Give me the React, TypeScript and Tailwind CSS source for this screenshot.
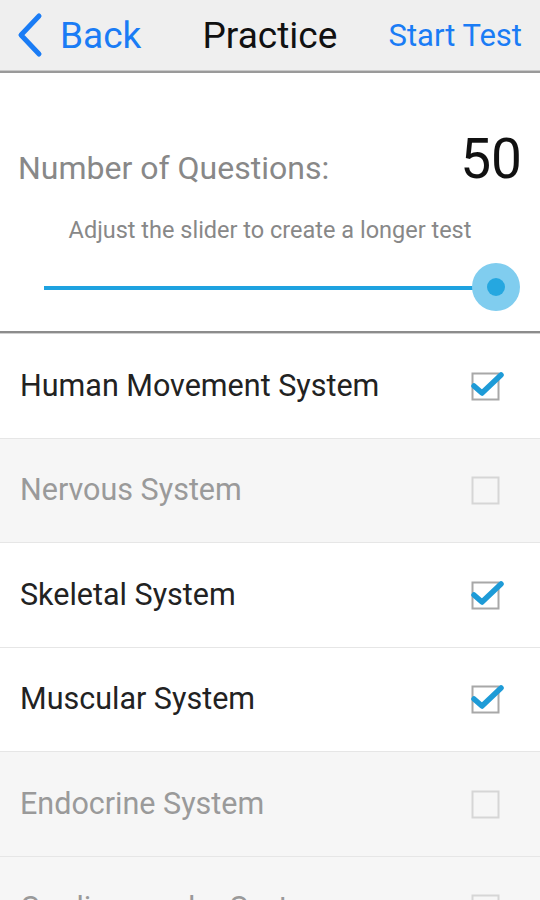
import { useState } from "react"

const topics = [
  { name: "Human Movement System", checked: true },
  { name: "Nervous System", checked: false },
  { name: "Skeletal System", checked: true },
  { name: "Muscular System", checked: true },
  { name: "Endocrine System", checked: false },
  { name: "Cardiovascular System", checked: false },
]

function CheckBox({ checked }: { checked: boolean }) {
  return (
    <svg width="34" height="34" viewBox="0 0 34 34">
      <rect x="2.5" y="4.5" width="26" height="26" fill="none" stroke={checked ? "#a8a8a8" : "#d6d6d6"} strokeWidth="2" />
      {checked && (
        <path d="M4 17 L12 24 L31 6" fill="none" stroke="#1e9bd7" strokeWidth="5.5" strokeLinecap="round" strokeLinejoin="round" />
      )}
    </svg>
  )
}

export default function App() {
  const [items, setItems] = useState(topics)

  const toggle = (i: number) => {
    setItems(items.map((t, idx) => (idx === i ? { ...t, checked: !t.checked } : t)))
  }

  return (
    <div className="w-[540px] h-[900px] overflow-hidden bg-white" style={{ fontFamily: "Roboto, 'Noto Sans', sans-serif" }}>
      {/* nav bar */}
      <div className="h-[70px] bg-[#efefef] flex items-center pl-4 pr-[18px] justify-between">
        <div className="flex items-center gap-[16px] text-[#1a7cf5]">
          <svg width="28" height="46" viewBox="0 0 28 46">
            <path d="M23 4 L5 23 L23 42" fill="none" stroke="#1a7cf5" strokeWidth="5" strokeLinecap="round" strokeLinejoin="round" />
          </svg>
          <span className="text-[37px] leading-none">Back</span>
        </div>
        <span className="text-[37px] leading-none text-[#111] ml-[10px]">Practice</span>
        <span className="text-[31px] leading-none text-[#1a7cf5]">Start Test</span>
      </div>
      <div className="h-[3px] bg-[#9a9a9a] border-t border-[#c8c8c8]" />

      {/* question count */}
      <div className="h-[258px] flex flex-col">
        <div className="flex items-end justify-between px-[18px] pt-[59px]">
          <span className="text-[32px] leading-none text-[#888] pb-[3px]">Number of Questions:</span>
          <span className="text-[55px] leading-none text-[#111]">50</span>
        </div>
        <div className="text-center text-[23.5px] text-[#888] mt-[32px] leading-none">
          Adjust the slider to create a longer test
        </div>
        <div className="relative mt-[20px] h-[50px] mx-[44px] mr-[20px]">
          <div className="absolute left-0 right-[24px] top-[23px] h-[4px] bg-[#1ea2e0]" />
          <div className="absolute right-0 top-0 w-[48px] h-[48px] rounded-full bg-[#80cdef] flex items-center justify-center">
            <div className="w-[18px] h-[18px] rounded-full bg-[#25a7e0]" />
          </div>
        </div>
      </div>
      <div className="h-[3px] bg-[#8c8c8c] border-b border-[#d0d0d0]" />

      {/* topics */}
      <div className="flex flex-col">
        {items.map((t, i) => (
          <div
            key={t.name}
            onClick={() => toggle(i)}
            className={`h-[104.5px] shrink-0 flex items-center justify-between pl-5 pr-[36px] border-b border-[#e6e6e6] ${t.checked ? "bg-white" : "bg-[#f6f6f6]"}`}
          >
            <span className={`text-[30.5px] leading-none ${t.checked ? "text-[#222]" : "text-[#9a9a9a]"}`}>{t.name}</span>
            <CheckBox checked={t.checked} />
          </div>
        ))}
      </div>
    </div>
  )
}
